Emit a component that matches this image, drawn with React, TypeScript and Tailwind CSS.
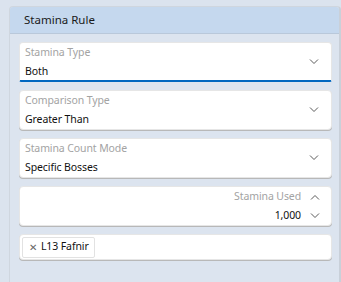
import React from 'react';

const font = { fontFamily: '"Segoe UI", "Noto Sans", "Open Sans", sans-serif' };

function Chevron({ up = false }: { up?: boolean }) {
  return (
    <svg width="10" height="6" viewBox="0 0 10 6" className="text-[#5a5a5a]">
      <path
        d={up ? 'M1 5.5 L5 1.5 L9 5.5' : 'M1 0.5 L5 4.5 L9 0.5'}
        fill="none"
        stroke="currentColor"
        strokeWidth="1"
      />
    </svg>
  );
}

function SelectField({ label, value, focused = false }: { label: string; value: string; focused?: boolean }) {
  return (
    <div
      className={`relative h-10 rounded-[4px] bg-white border border-[#e6e6e6] shadow-[0_1px_0_#b8b8b8] flex items-center pl-[5px] pr-[12px] ${
        focused ? 'border-b-[2px] border-b-[#0067c0] shadow-none rounded-b-[2px]' : ''
      }`}
    >
      <div className="flex-1 flex flex-col leading-none tracking-[-0.1px]">
        <span className="text-[10.5px] text-[#a3a3a3] leading-[15px]">{label}</span>
        <span className="text-[10.5px] text-[#111] leading-[15px] mt-[4px]">{value}</span>
      </div>
      <Chevron />
    </div>
  );
}

export default function App() {
  return (
    <div className="w-[341px] h-[282px] overflow-hidden bg-[#dbe3ee] pl-[9px] pt-[6px]" style={font}>
      <div className="h-[300px] rounded-tl-[4px] rounded-tr-[4px] border border-[#cfd6df] border-r-[2px] border-r-[#c9d0d9] bg-[#dce4ef]">
        <div className="h-[27px] bg-[#c5d8ee] border-b border-[#b9c8da] rounded-t-[3px] flex items-center pl-[14px] text-[11.5px] text-[#1a1a1a]">
          Stamina Rule
        </div>
        <div className="pl-[9px] pr-[7px] pt-[8px] flex flex-col gap-[8px]">
          <SelectField label="Stamina Type" value="Both" focused />
          <SelectField label="Comparison Type" value="Greater Than" />
          <SelectField label="Stamina Count Mode" value="Specific Bosses" />
          <div className="h-10 rounded-[4px] bg-white border border-[#e6e6e6] shadow-[0_1px_0_#b8b8b8] flex items-center justify-end pr-[11px]">
            <div className="flex flex-col items-end leading-none mr-[9px] tracking-[-0.1px]">
              <span className="text-[10.5px] text-[#a3a3a3] leading-[15px]">Stamina Used</span>
              <span className="text-[10.5px] text-[#111] leading-[15px] mt-[4px]">1,000</span>
            </div>
            <div className="flex flex-col gap-[13px] items-center">
              <Chevron up />
              <Chevron />
            </div>
          </div>
          <div className="h-[26px] rounded-[4px] bg-white border border-[#e6e6e6] shadow-[0_1px_0_#b8b8b8] flex items-center pl-[2px]">
            <div className="h-[21px] border border-[#e2e2e2] rounded-[2px] flex items-center pl-[6px] pr-[5px] gap-[4px] text-[10.5px] tracking-[-0.1px] text-[#111]">
              <span className="text-[#666] text-[10px]">✕</span>
              <span>L13 Fafnir</span>
            </div>
          </div>
        </div>
      </div>
    </div>
  );
}
